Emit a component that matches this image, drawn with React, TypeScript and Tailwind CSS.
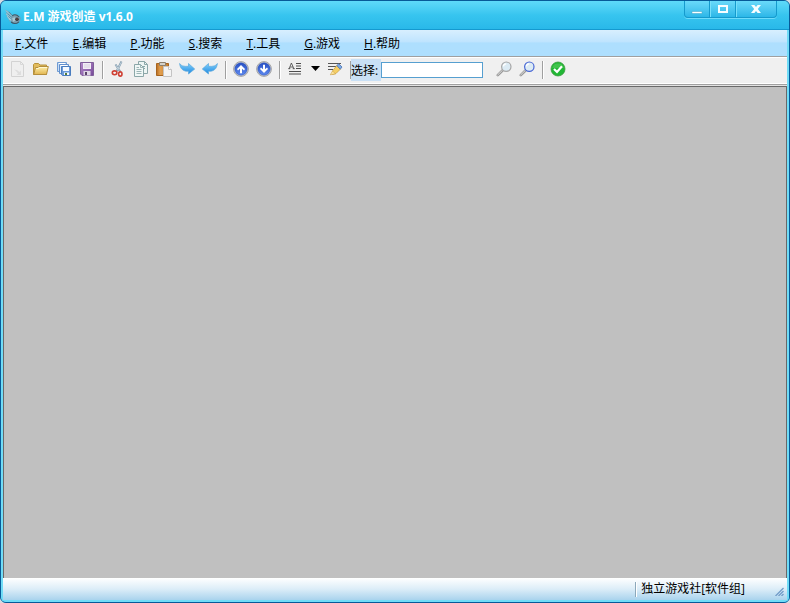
import { ReactNode } from 'react'

const menus = [
    { key: 'F', text: '文件' },
    { key: 'E', text: '编辑' },
    { key: 'P', text: '功能' },
    { key: 'S', text: '搜索' },
    { key: 'T', text: '工具' },
    { key: 'G', text: '游戏' },
    { key: 'H', text: '帮助' },
]

function Icon({ children }: { children: ReactNode }) {
    return <svg className="h-4 w-4 shrink-0" viewBox="0 0 16 16" fill="none" aria-hidden="true">{children}</svg>
}

function Tool({ label, children }: { label: string; children: ReactNode }) {
    return (
        <button type="button" aria-label={label} className="flex h-6 w-[23px] shrink-0 items-center justify-center pr-px pb-[2px]">
            <Icon>{children}</Icon>
        </button>
    )
}

function Separator() {
    return <div className="mx-[3px] h-[18px] w-[2px] shrink-0 border-l border-[#a0a0a0] bg-white" />
}

function Gradients() {
    return (
        <svg className="absolute h-0 w-0" aria-hidden="true">
            <defs>
                <linearGradient id="folder" x1="0" y1="0" x2="0" y2="1"><stop stopColor="#fff0ac" /><stop offset="1" stopColor="#e1b54f" /></linearGradient>
                <linearGradient id="arrow" x1="0" y1="0" x2="0" y2="1"><stop stopColor="#7fd0fb" /><stop offset="1" stopColor="#1f88e0" /></linearGradient>
                <linearGradient id="disk" x1="0" y1="0" x2="1" y2="1"><stop stopColor="#b48acb" /><stop offset="1" stopColor="#774a99" /></linearGradient>
                <linearGradient id="ball" x1="0" y1="0" x2="0" y2="1"><stop stopColor="#274fc2" /><stop offset="1" stopColor="#5d89ef" /></linearGradient>
                <linearGradient id="board" x1="0" y1="0" x2="1" y2="0"><stop stopColor="#b66b20" /><stop offset=".3" stopColor="#e2a050" /><stop offset="1" stopColor="#c27b2e" /></linearGradient>
            </defs>
        </svg>
    )
}

function RoundArrow({ down }: { down?: boolean }) {
    return (
        <>
            <circle cx="8" cy="8" r="7.4" fill="#dcdcdc" stroke="#a4a4a4" />
            <circle cx="8" cy="8" r="6.2" fill="url(#ball)" stroke="#3155b8" strokeWidth=".6" />
            <path d={down ? 'M7 3.8h2v4.5l2-1.8 1 1.6-4 4-4-4 1-1.6 2 1.8z' : 'M7 12.2h2V7.7l2 1.8 1-1.6-4-4-4 4 1 1.6 2-1.8z'} fill="#fff" />
        </>
    )
}

function Magnifier({ color }: { color: string }) {
    return (
        <>
            <path d="M6.5 9.5 1.8 14.2" stroke="#9a9a9a" strokeWidth="2.6" strokeLinecap="round" />
            <path d="M6.5 9.2 1.8 13.8" stroke="#dedede" strokeWidth="1" strokeLinecap="round" />
            <circle cx="10.3" cy="5.7" r="4.7" fill="#dcebf4" stroke={color} strokeWidth="1.2" />
            <path d="M7.4 5.4c.2-1.5 1.3-2.4 2.8-2.5" stroke="#fff" strokeWidth="1.3" />
        </>
    )
}

function AppLogo() {
    return (
        <svg className="h-4 w-4 shrink-0" viewBox="0 0 16 16" aria-hidden="true">
            <path d="M.3.8 3.8 2.6 7 5.6 8 8l-.8 4.6-3.4-.4L4.6 11 2.2 9.6l1.2-.4L1 7l1.3-.1L.3 4.4l1.2-.1z" fill="#6fa9c0" />
            <path d="m1 1.6 5.6 5.6M1 4.7l5.2 4.6M1.9 7.3l4.3 3.4M3.5 9.7l3 1.8" stroke="#b5dce8" strokeWidth=".8" />
            <path d="M4 2.9 7 6.2M3.2 5.2l3.5 3M3.4 7.6l3 2.2" stroke="#3f7790" strokeWidth=".6" />
            <path d="M6.8 7.2 9 5.6l3.6.4 2.2 1.8.9 1.2-.8 3-2.2 2.3-3.2.4-3.3-1.6z" fill="#7c9dad" />
            <path d="M7.2 6.7c2.2-1.4 5-.8 6.9 1.3M6 13c2.5 2 5.6 1.8 8-.2" stroke="#3c5869" strokeWidth="1.1" fill="none" />
            <path d="m7.2 9 2.8-.8.5 3.3-2.4 1.2z" fill="#a9c7d3" />
            <circle cx="12" cy="10.2" r="1.7" fill="#292e36" />
            <path d="M11.5 10h1" stroke="#c46a4f" />
        </svg>
    )
}

function TitleBar() {
    return (
        <header className="flex h-[29px] shrink-0 justify-between border-b border-[#1599cf] bg-linear-to-b from-[#5edaf9] via-[#37c5ef] to-[#29b8e9] pr-3 pl-1">
            <h1 className="flex items-center gap-[2px] pt-[3px] text-[12px] leading-4 font-bold text-white">
                <AppLogo />
                E.M 游戏创造 v1.6.0
            </h1>
            <div className="flex h-[17px] w-[93px] overflow-hidden rounded-b-[4px] border border-t-0 border-[#159acd] bg-linear-to-b from-[#69dafa] to-[#2ab7e8] shadow-[0_1px_0_#70dcfa]">
                <button type="button" aria-label="最小化" className="flex w-[25px] items-center justify-center border-r border-[#159acd]">
                    <svg width="12" height="12" viewBox="0 0 12 12"><path d="M1 8.5h10v2H1z" fill="#fff" stroke="#3aa3c5" strokeWidth=".5" /></svg>
                </button>
                <button type="button" aria-label="最大化" className="flex w-[26px] items-center justify-center border-r border-[#159acd] shadow-[inset_1px_0_0_#78e0fb]">
                    <svg width="12" height="12" viewBox="0 0 12 12"><path d="M1 2h10v8H1zm2 2v4h6V4z" fill="#f7fdff" fillRule="evenodd" /></svg>
                </button>
                <button type="button" aria-label="关闭" className="flex flex-1 items-center justify-center shadow-[inset_1px_0_0_#78e0fb]">
                    <svg width="12" height="12" viewBox="0 0 12 12"><path d="M1 2h3.4L6 4l1.6-2H11L7.8 6l3.2 4H7.6L6 8l-1.6 2H1l3.2-4z" fill="#f7fdff" /></svg>
                </button>
            </div>
        </header>
    )
}

function MenuBar() {
    return (
        <nav className="flex h-[26px] shrink-0 bg-linear-to-b from-[#d8effe] from-0% via-[#bfe4fe] via-45% to-[#aedffe] to-50%">
            {menus.map((menu) => (
                <button key={menu.key} type="button" className="px-3 pt-[2px] text-[12px] leading-5 text-black">
                    <span className="underline underline-offset-1">{menu.key}</span>.{menu.text}
                </button>
            ))}
        </nav>
    )
}

function ToolBar() {
    return (
        <div role="toolbar" className="flex h-[29px] shrink-0 items-center border-y border-[#a0a0a0] bg-[#f0f0f0] pb-[2px] pl-1 shadow-[inset_0_1px_0_#fff,inset_0_-1px_0_#fff]">
            <Tool label="新建">
                <path d="M1.5.5h9l3 3v12h-12z" fill="#efefef" stroke="#d3d3d3" />
                <path d="M10.5.5v3h3" stroke="#d8d8d8" />
                <path d="M4 8.5c2 0 4 .8 5.5 2.5L11 9.5V14H6.5L8 12.5C7 11 5.500 9.500 4 8.500z" fill="#dedede" />
            </Tool>
            <Tool label="打开">
                <path d="M.5 13.500v-10l1-1h4L7 4h6.500v9.500z" fill="#e2bc5d" stroke="#b8933c" />
                <path d="M.7 13.500 2.500 6.500H5l1-1h9.300l-1.800 8z" fill="url(#folder)" stroke="#b58e3c" />
                <path d="M3.200 7.500h2.300l1-1h7.600" stroke="#fff8d3" />
            </Tool>
            <Tool label="全部保存">
                <path d="M1.500 1.500h9v9h-9z" fill="#c8ddf5" stroke="#6f9bd3" />
                <path d="M3.500 3.500h9v9h-9z" fill="#e1edfa" stroke="#6290cd" />
                <path d="M5.500 5.500h9v9h-8l-1-1z" fill="#6b9bda" stroke="#4a7dbf" />
                <path d="M7 6h6v4H7zm1 5.500h5V14H8z" fill="#f5faff" /><path d="M9 12h2v2H9z" fill="#527b35" />
                <path d="M3 2.500h6M5 4.500h6" stroke="#fff" />
            </Tool>
            <Tool label="保存">
                <path d="M1.500 1.500h13v13H3l-1.500-1.500z" fill="url(#disk)" stroke="#80609a" />
                <path d="M4 2h8v6H4z" fill="#f2eef6" /><path d="M4.500 10h7v4.500h-7z" fill="#ded6e5" />
                <path d="M6 11h2v3H6z" fill="#594368" /><path d="M5 4h6M5 6h6" stroke="#d9d0e0" />
            </Tool>
            <Separator />
            <Tool label="剪切">
                <path d="M11.500.5 6.800 10M5.500 3.500l4.700 7" stroke="#7f98aa" strokeWidth="2" />
                <path d="m11.400 1-4.300 8.400M5.800 4l3.700 5.400" stroke="#d0e0e9" strokeWidth=".8" />
                <ellipse cx="4.600" cy="11.800" rx="2.300" ry="1.900" stroke="#cf4034" strokeWidth="1.600" />
                <ellipse cx="10.300" cy="13" rx="1.700" ry="2.100" stroke="#cf4034" strokeWidth="1.600" />
            </Tool>
            <Tool label="复制">
                <path d="M5.500.5h6l3 3v9h-9z" fill="#edf5f4" stroke="#8ba7a8" />
                <path d="M11.500.5v3h3M8 5.500h4M8 7.500h4" stroke="#8ba7a8" />
                <path d="M1.500 3.500h6l3 3v9h-9z" fill="#f0f7f6" stroke="#8ba7a8" />
                <path d="M7.500 3.500v3h3M3.500 6.500H6m-2.500 2h5m-5 2h5m-5 2h5" stroke="#9cb5b6" />
            </Tool>
            <Tool label="粘贴">
                <path d="M.5 2.500h12v12H.5z" fill="url(#board)" stroke="#a7641f" />
                <path d="M3.500 1.500h6v3h-6z" fill="#d5d1c8" stroke="#8c7f6c" />
                <path d="M7.500 5.500h5l3 3v7h-8z" fill="#f4f4f4" stroke="#c4c4c4" /><path d="M12.500 5.500v3h3" fill="#fff" stroke="#c4c4c4" />
            </Tool>
            <Tool label="重做">
                <path d="M.6 2.500c1.300 2.300 4 3.200 8.900 2.800V2.500l6.200 5.500-6.200 5v-2.800C4.800 10.700 1.200 8.200.6 2.500z" fill="url(#arrow)" stroke="#5aa8dd" strokeWidth=".7" />
            </Tool>
            <Tool label="撤销">
                <path d="M15.400 2.500c-1.300 2.300-4 3.200-8.900 2.800V2.500L.3 8l6.200 5v-2.800c4.700.5 8.300-2 8.900-7.700z" fill="url(#arrow)" stroke="#5aa8dd" strokeWidth=".7" />
            </Tool>
            <Separator />
            <Tool label="上移"><RoundArrow /></Tool>
            <Tool label="下移"><RoundArrow down /></Tool>
            <Separator />
            <Tool label="文本格式">
                <path d="M2 8 4.400 2 7 8M3 6h3M1.300 7.700h2M5.700 7.700h2" stroke="#444" strokeWidth=".8" />
                <path d="M9 2.500h5M9 5h5M9 7.500h5M2 10.500h12M2 13h12" stroke="#4d4d4d" />
            </Tool>
            <button type="button" aria-label="更多格式" className="flex h-6 w-[17px] shrink-0 items-center justify-center pb-[2px]">
                <svg width="9" height="5" viewBox="0 0 9 5"><path d="M0 0h9L4.500 5z" fill="#000" /></svg>
            </button>
            <Tool label="突出显示">
                <path d="M1 2.500h13M1 5.500h8M1 8.500h5" stroke="#555" strokeWidth="1.200" />
                <path d="m5.500 10 4.300-5.500 3.700 3.500L9 12.500l-3.500 1z" fill="#f5cf65" stroke="#c99a35" strokeWidth=".7" />
                <path d="m9.800 4.500 2-1.700 3.200 3.200-1.700 2.200z" fill="#7fabe6" stroke="#4771b1" strokeWidth=".8" />
                <path d="m5.500 10 3 2.800-5.200 1z" fill="#ffe8a0" stroke="#cda047" strokeWidth=".6" />
            </Tool>
            <div className="ml-[3px] h-[18px] w-px shrink-0 bg-[#a0a0a0]" />
            <label htmlFor="select-text" className="h-[22px] w-[30px] shrink-0 bg-[#c9e0f5] text-[12px] leading-6 whitespace-nowrap text-black">选择:</label>
            <input id="select-text" type="text" className="h-4 w-[102px] border border-[#569fd0] bg-white px-1 text-[12px] outline-none" />
            <div className="w-[10px] shrink-0" />
            <Tool label="查找"><Magnifier color="#a8a8a8" /></Tool>
            <Tool label="查找下一个"><Magnifier color="#4867d5" /></Tool>
            <Separator />
            <Tool label="确定">
                <circle cx="8" cy="8" r="7" fill="#21b735" stroke="#3c9c3f" strokeWidth=".8" />
                <path d="M2.200 7a6 6 0 0 1 11.600 0z" fill="#56cd5b" opacity=".6" />
                <path d="m4 8 3 3 5-5.700" stroke="#fff" strokeWidth="2.200" />
            </Tool>
        </div>
    )
}

function StatusBar() {
    return (
        <footer className="flex h-[22px] shrink-0 items-center justify-end bg-linear-to-b from-white via-[#dcedf8] to-[#a9d3ed]">
            <div className="h-[15px] w-[2px] border-l border-[#8ca8ba] bg-white" />
            <span className="pr-[30px] pl-1 text-[12px] leading-5 text-black">独立游戏社[软件组]</span>
            <svg className="mr-[3px] mb-1 h-[9px] w-[9px] self-end" viewBox="0 0 9 9" aria-hidden="true">
                <path d="m.5 9 8-8m-5 8 5-5m-2 5 2-2" stroke="#719bc8" strokeWidth="1.300" />
            </svg>
        </footer>
    )
}

export default function App() {
    return (
        <div className="h-screen bg-[#d5dce2] font-['Open_Sans','Noto_Sans_CJK_SC',sans-serif]">
            <Gradients />
            <div className="flex h-full flex-col overflow-hidden rounded-[6px] border border-[#075a98] bg-[#43c3eb]">
                <TitleBar />
                <div className="flex min-h-0 flex-1 flex-col border-x-2 border-b-2 border-[#70dcf7]">
                    <MenuBar />
                    <ToolBar />
                    <main className="mt-px min-h-0 flex-1 border-x border-t border-[#696969] bg-[#c0c0c0] shadow-[0_-1px_0_#e3e3e3]" />
                    <StatusBar />
                </div>
            </div>
        </div>
    )
}
